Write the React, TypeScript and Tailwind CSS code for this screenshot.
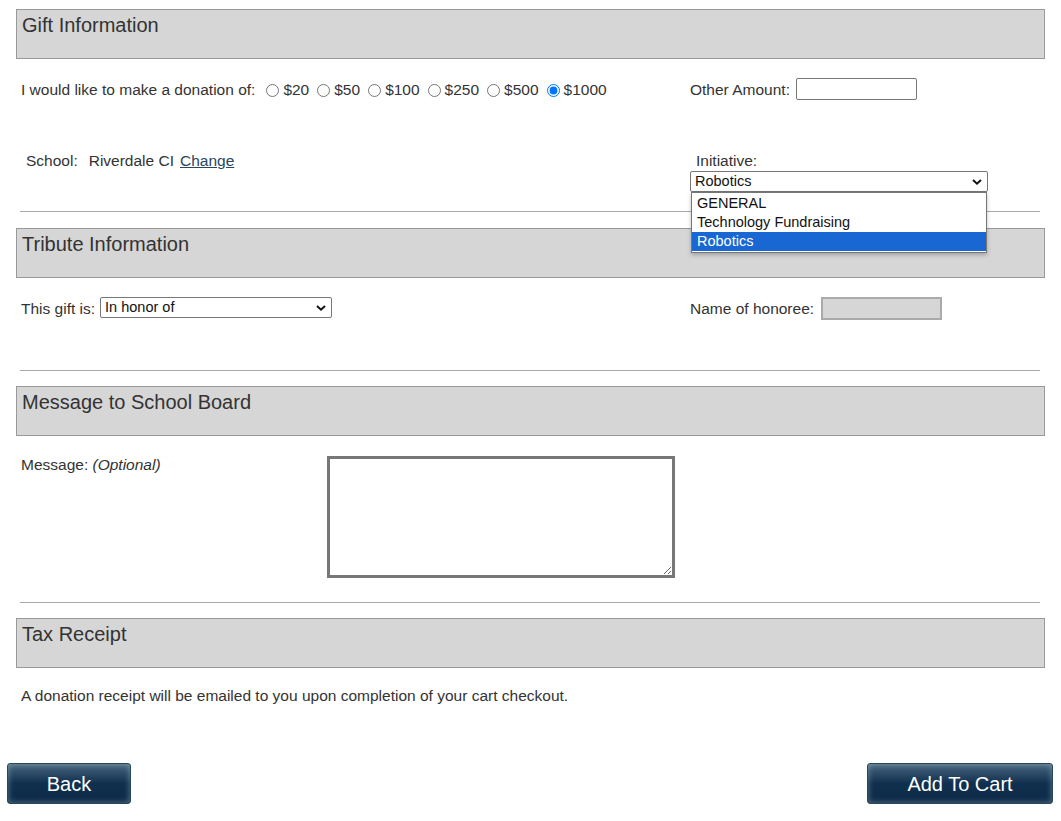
import React from 'react';

const SectionHeader: React.FC<{ title: string; className?: string }> = ({ title, className = '' }) => (
  <div className={`h-[50px] border border-[#999] bg-[#d6d6d6] pl-[5px] pt-[3px] text-[20px] leading-[24px] text-[#333] ${className}`}>
    {title}
  </div>
);

const Divider: React.FC<{ className?: string }> = ({ className = '' }) => (
  <div className={`ml-[4px] mr-[5px] h-px bg-[#aaa] ${className}`} />
);

const Chevron: React.FC = () => (
  <svg width="10" height="7" viewBox="0 0 10 7" className="pointer-events-none absolute right-[6px] top-1/2 -translate-y-1/2">
    <path d="M1 1.5 L5 5.2 L9 1.5" fill="none" stroke="#111" strokeWidth="2" />
  </svg>
);

const FakeSelect: React.FC<{ value: string; options: string[]; className?: string }> = ({ value, options, className = '' }) => (
  <div className={`relative ${className}`}>
    <select
      defaultValue={value}
      className="block h-full w-full appearance-none rounded-[2px] border border-[#767676] bg-white pl-[4px] text-[14.5px] leading-[19px] text-[#111]"
    >
      {options.map((o) => (
        <option key={o}>{o}</option>
      ))}
    </select>
    <Chevron />
  </div>
);

const amounts = ['$20', '$50', '$100', '$250', '$500', '$1000'];

export default function App() {
  return (
    <div className="min-h-[821px] w-full bg-white font-['Liberation_Sans',Arial,sans-serif] text-[15.5px] text-[#333]">
      <div className="px-[16px] pt-[9px]">
        {/* Gift */}
        <SectionHeader title="Gift Information" />
        <div className="mt-[19px] flex h-[22px] items-center pl-[5px]">
          <div className="flex w-[669px] items-center pt-[2px]">
            <span>I would like to make a donation of:</span>
            <span className="ml-[3px] flex items-center">
              {amounts.map((a) => (
                <label key={a} className="flex items-center">
                  <input
                    type="radio"
                    name="amount"
                    defaultChecked={a === '$1000'}
                    className="mr-[4px] ml-[8px] h-[13px] w-[13px] accent-[#0075ff]"
                  />
                  <span>{a}</span>
                </label>
              ))}
            </span>
          </div>
          <span className="pt-[1px]">Other Amount:</span>
          <input type="text" className="ml-[6px] h-[22px] w-[121px] rounded-[2px] border border-[#767676] bg-white" />
        </div>

        <div className="mt-[52px] flex pl-[5px]">
          <div className="flex h-[18px] w-[669px] items-center pl-[5px]">
            <span>School:</span>
            <span className="ml-[11px]">Riverdale CI</span>
            <a href="#" className="ml-[6px] text-[#2a4560] underline">
              Change
            </a>
          </div>
          <div>
            <div className="h-[18px] pl-[6px] leading-[18px]">Initiative:</div>
            <div className="relative mt-[1px]">
              <FakeSelect value="Robotics" options={['GENERAL', 'Technology Fundraising', 'Robotics']} className="h-[21px] w-[298px]" />
              <div className="absolute left-[1px] top-[21px] z-10 w-[296px] border border-[#767676] bg-white py-[1px] text-[14.5px] leading-[19px] text-[#111] shadow-[0_2px_4px_rgba(0,0,0,0.25)]">
                <div className="pl-[5px]">GENERAL</div>
                <div className="pl-[5px]">Technology Fundraising</div>
                <div className="bg-[#1967d2] pl-[5px] text-white">Robotics</div>
              </div>
            </div>
          </div>
        </div>

        <Divider className="mt-[19px]" />

        {/* Tribute */}
        <SectionHeader title="Tribute Information" className="mt-[16px]" />
        <div className="mt-[19px] flex h-[23px] items-center pl-[5px]">
          <div className="flex w-[669px] items-center">
            <span>This gift is:</span>
            <FakeSelect value="In honor of" options={['In honor of', 'In memory of']} className="-mt-[2px] ml-[5px] h-[21px] w-[232px]" />
          </div>
          <span>Name of honoree:</span>
          <input type="text" disabled className="ml-[7px] h-[23px] w-[121px] border-2 border-[#aaa] bg-[#d6d6d6]" />
        </div>

        <Divider className="mt-[50px]" />

        {/* Message */}
        <SectionHeader title="Message to School Board" className="mt-[15px]" />
        <div className="mt-[20px] flex pl-[5px]">
          <div className="w-[306px] leading-[18px]">
            Message: <i>(Optional)</i>
          </div>
          <textarea className="h-[122px] w-[348px] border-[3px] border-[#777] bg-white" />
        </div>

        <Divider className="mt-[24px]" />

        {/* Tax */}
        <SectionHeader title="Tax Receipt" className="mt-[15px]" />
        <div className="mt-[18px] pl-[5px] leading-[20px]">
          A donation receipt will be emailed to you upon completion of your cart checkout.
        </div>
      </div>

      <div className="mt-[57px] flex justify-between pl-[7px] pr-[8px]">
        <button className="h-[41px] w-[124px] rounded-[3px] border border-[#244a5a] bg-gradient-to-b from-[#46667f] via-[#10304f] to-[#0c2b48] text-[20px] text-white shadow-[inset_0_0_6px_rgba(255,255,255,0.35)]">
          Back
        </button>
        <button className="h-[41px] w-[186px] rounded-[3px] border border-[#244a5a] bg-gradient-to-b from-[#46667f] via-[#10304f] to-[#0c2b48] text-[20px] text-white shadow-[inset_0_0_6px_rgba(255,255,255,0.35)]">
          Add To Cart
        </button>
      </div>
    </div>
  );
}
